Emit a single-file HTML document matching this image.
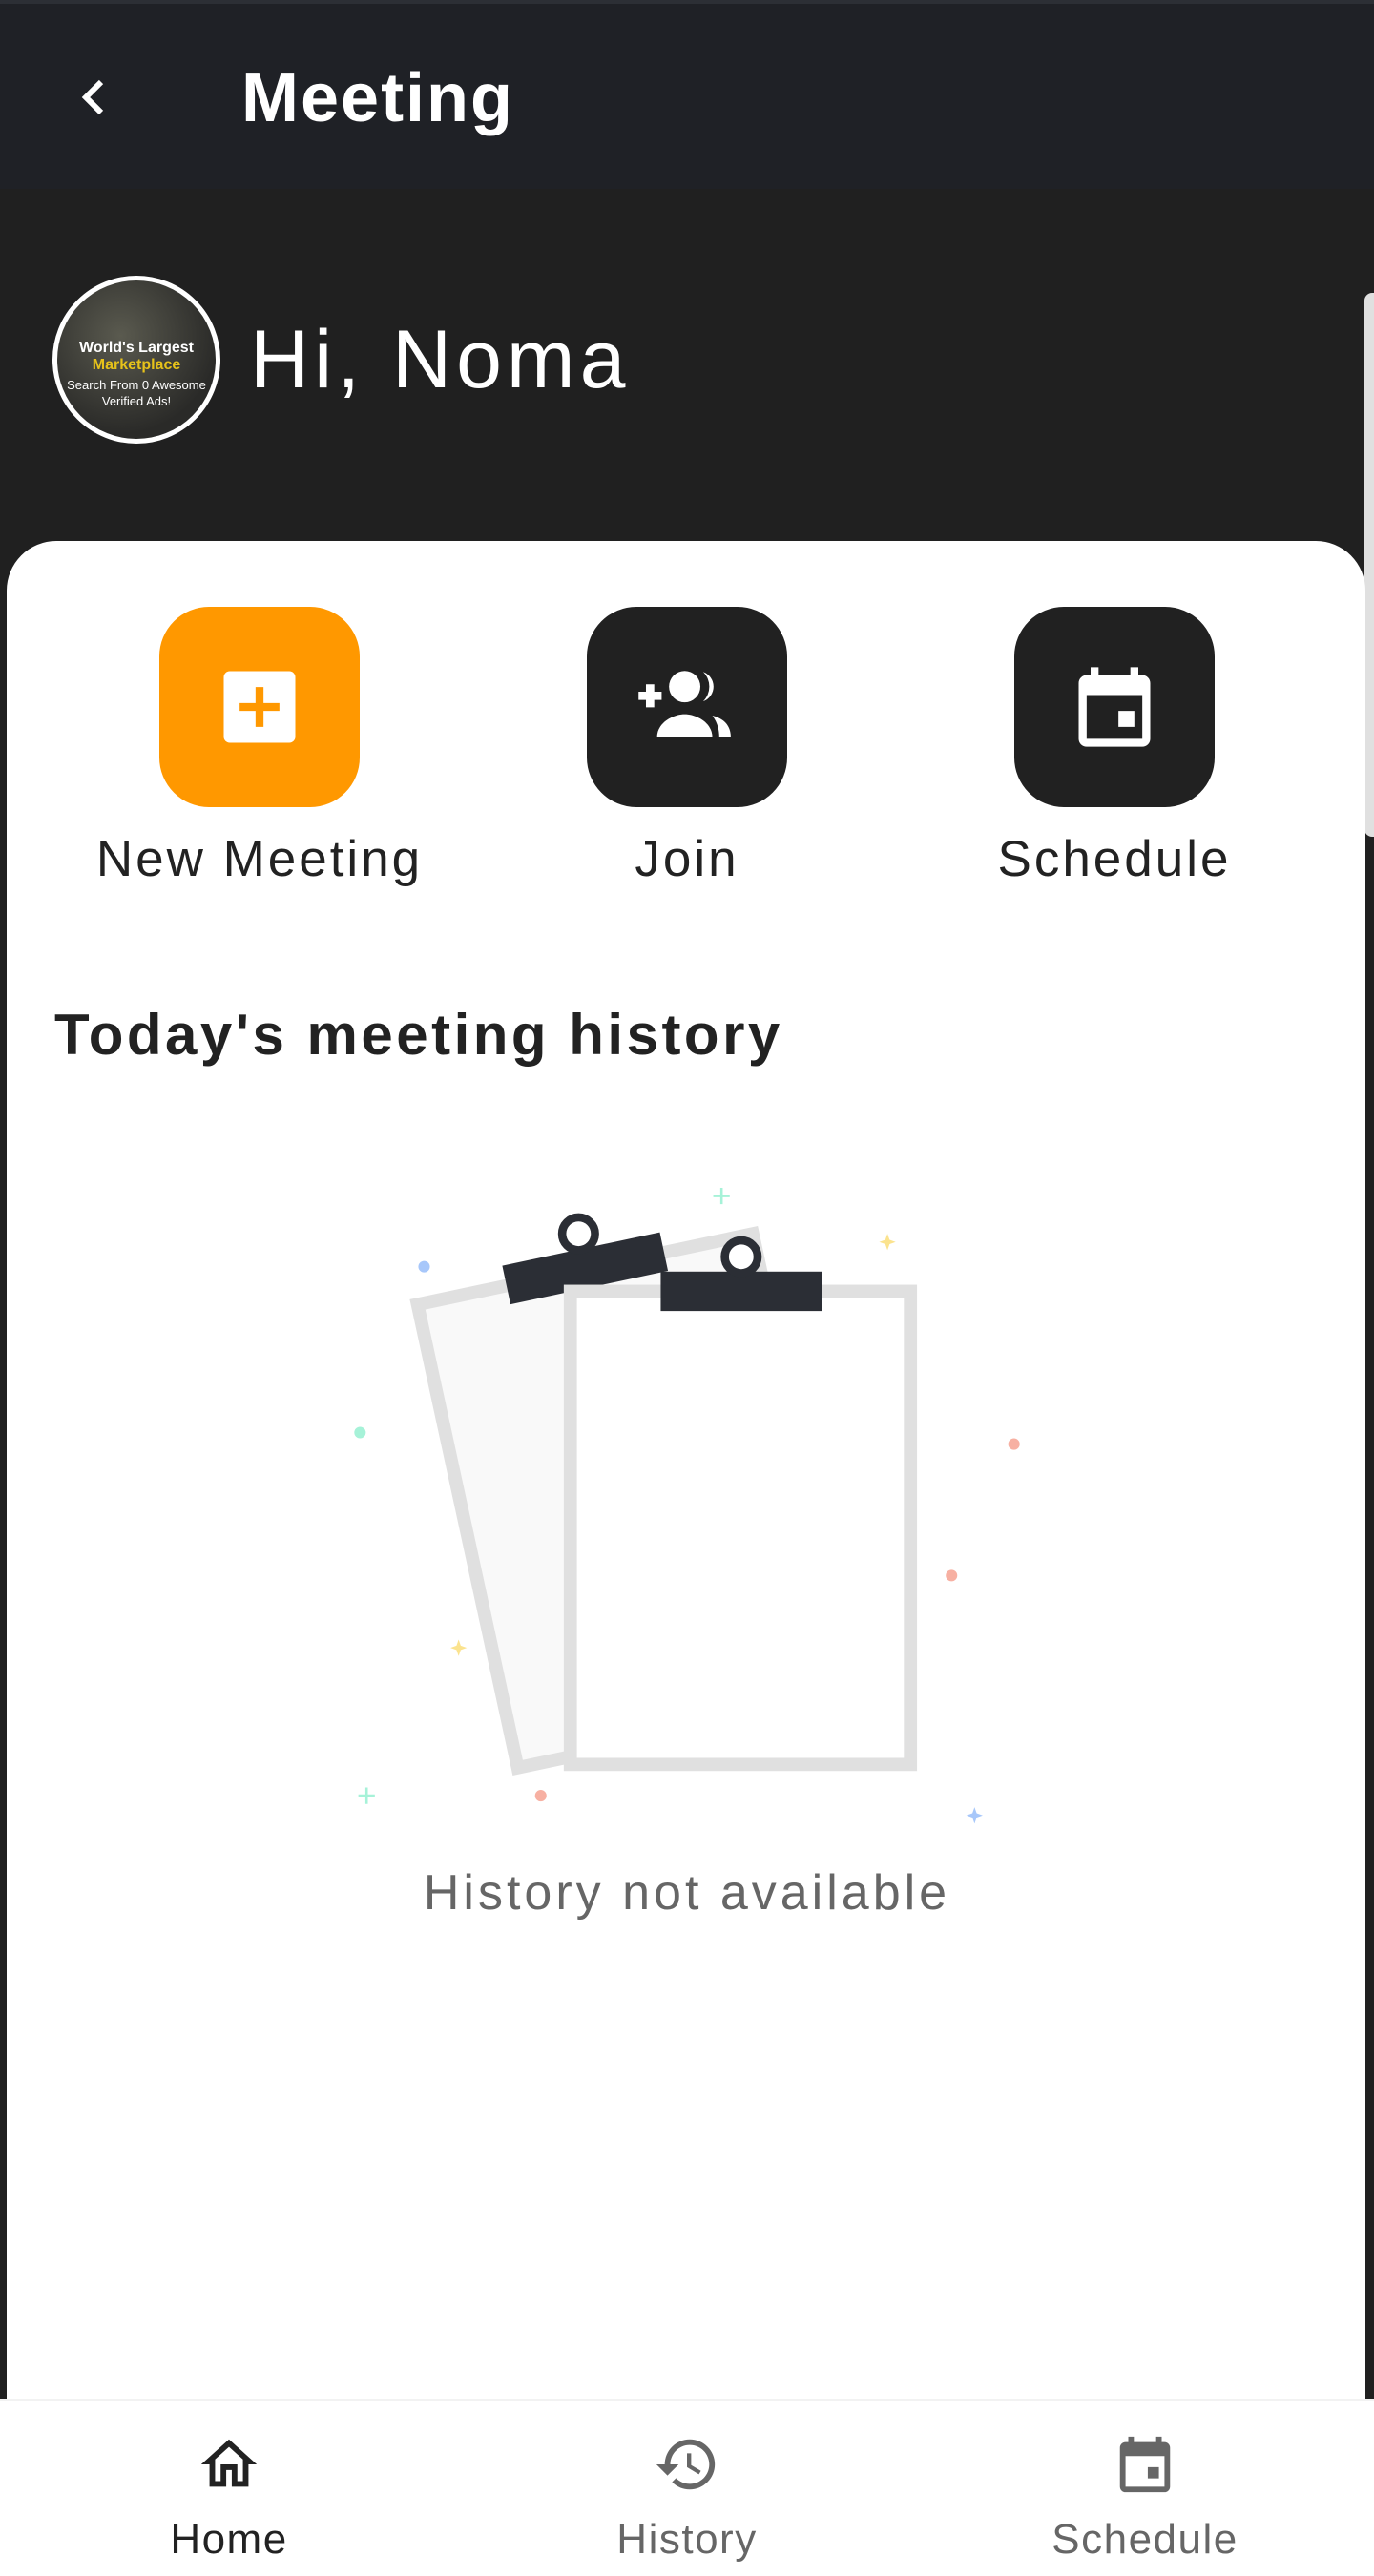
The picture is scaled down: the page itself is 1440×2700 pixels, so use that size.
<!DOCTYPE html>
<html><head><meta charset="utf-8"><style>
*{margin:0;padding:0;box-sizing:border-box}
body{width:1440px;height:2700px;background:#202020;font-family:"Liberation Sans",sans-serif;position:relative;overflow:hidden}
.top{position:absolute;left:0;top:0;width:1440px;height:198px;background:#1f2126;border-top:4px solid #2c2f35}
.title{position:absolute;left:253px;top:58px;font-size:72px;font-weight:bold;color:#fff;letter-spacing:2px}
.hi{position:absolute;left:262px;top:328px;font-size:86px;color:#fff;letter-spacing:5px}
.card{position:absolute;left:7px;top:567px;width:1424px;height:2000px;background:#fff;border-radius:52px 52px 0 0}
.btn{position:absolute;top:636px;width:210px;height:210px;border-radius:52px;background:#212121}
.lbl{position:absolute;top:870px;width:460px;text-align:center;font-size:53px;color:#222;letter-spacing:3px}
.h{position:absolute;left:57px;top:1050px;font-size:60px;font-weight:bold;color:#222;letter-spacing:3.5px}
.na{position:absolute;left:0;width:1440px;top:1954px;text-align:center;font-size:52px;color:#666;letter-spacing:4px}
.nav{position:absolute;left:0;top:2515px;width:1440px;height:185px;background:#fff;border-top:2px solid #f2f2f2}
.nl{position:absolute;top:2637px;width:300px;text-align:center;font-size:44px;color:#666;letter-spacing:1.5px}
</style></head><body>
<div class="top">
<svg style="position:absolute;left:78px;top:76px" width="40" height="44" viewBox="0 0 40 44"><path d="M28 6 L12 22 L28 38" stroke="#fff" stroke-width="6" fill="none"/></svg>
<div class="title">Meeting</div>
</div>
<div style="position:absolute;left:1430px;top:307px;width:10px;height:570px;background:#e0e0e0;border-radius:8px 0 0 8px"></div>
<div style="position:absolute;left:55px;top:289px;width:176px;height:176px;border-radius:50%;border:5px solid #fff;background:radial-gradient(circle at 40% 35%,#5a5a4f,#2a2a28 70%);overflow:hidden;text-align:center;color:#fff">
<div style="margin-top:62px;font-size:16px;font-weight:bold">World's Largest</div>
<div style="font-size:16px;font-weight:bold;color:#e6c21a">Marketplace</div>
<div style="font-size:13px;margin-top:4px;white-space:nowrap">Search From 0 Awesome</div>
<div style="font-size:13px;margin-top:2px">Verified Ads!</div>
</div>
<div class="hi">Hi, Noma</div>
<div class="card"></div>
<div class="btn" style="left:167px;background:#ff9800"><svg style="position:absolute;left:55px;top:55px" width="100" height="100" viewBox="0 0 24 24"><rect x="3" y="3" width="18" height="18" rx="1.5" fill="#fff"/><path d="M12 7v10M7 12h10" stroke="#ff9800" stroke-width="2"/></svg></div>
<div class="btn" style="left:615px"><svg style="position:absolute;left:40px;top:45px" width="130" height="116" viewBox="0 0 24 24"><path d="M1.5 10h5M4 7.5v5" stroke="#fff" stroke-width="1.8"/><circle cx="11.5" cy="8" r="3.4" fill="#fff"/><path d="M5.5 19c0-3.2 3.5-5 6-5s6 1.8 6 5z" fill="#fff"/><path d="M15.5 4.8a3.4 3.4 0 0 1 0 6.4 4.5 4.5 0 0 0 0-6.4z" fill="#fff"/><path d="M17.5 14.3c2.2.5 4 1.9 4 4.7h-2.5c0-2-.6-3.5-1.5-4.7z" fill="#fff"/></svg></div>
<div class="btn" style="left:1063px"><svg style="position:absolute;left:55px;top:55px" width="100" height="100" viewBox="0 0 24 24"><path d="M19 4h-1V2h-2v2H8V2H6v2H5c-1.1 0-2 .9-2 2v14c0 1.1.9 2 2 2h14c1.1 0 2-.9 2-2V6c0-1.1-.9-2-2-2zm0 16H5V9h14v11zm-6-7h4v4h-4z" fill="#fff"/></svg></div>
<div class="lbl" style="left:42px">New Meeting</div>
<div class="lbl" style="left:490px">Join</div>
<div class="lbl" style="left:938px">Schedule</div>
<div class="h">Today's meeting history</div>
<svg style="position:absolute;left:0;top:0" width="1440" height="2700" viewBox="0 0 836 1568">
<polygon points="254,794 458,751 519,1033 315,1076" fill="#f9f9f9" stroke="#e0e0e0" stroke-width="8"/>
<g transform="rotate(-12 356 772)"><rect x="307" y="760" width="98" height="24" fill="#2b2e35"/></g>
<circle cx="352" cy="751" r="10" fill="#fff" stroke="#2b2e35" stroke-width="5"/>
<rect x="347" y="786" width="207" height="288" fill="#fff" stroke="#e0e0e0" stroke-width="8"/>
<rect x="402" y="774" width="98" height="24" fill="#2b2e35"/>
<circle cx="451" cy="765" r="10" fill="#fff" stroke="#2b2e35" stroke-width="5"/>
<circle cx="258" cy="771" r="3.5" fill="#a7c7fa"/>
<circle cx="219" cy="872" r="3.5" fill="#a6f2d8"/>
<circle cx="329" cy="1093" r="3.5" fill="#f7b0a2"/>
<circle cx="579" cy="959" r="3.5" fill="#f7b0a2"/>
<circle cx="617" cy="879" r="3.5" fill="#f7b0a2"/>
<path d="M439 723v10M434 728h10" stroke="#a6f2d8" stroke-width="1.5"/>
<path d="M223 1088v10M218 1093h10" stroke="#a6f2d8" stroke-width="1.5"/>
<path d="M540 751l1.3 3.7 3.7 1.3-3.7 1.3-1.3 3.7-1.3-3.7-3.7-1.3 3.7-1.3z" fill="#fbe38e"/>
<path d="M279 998l1.3 3.7 3.7 1.3-3.7 1.3-1.3 3.7-1.3-3.7-3.7-1.3 3.7-1.3z" fill="#fbe38e"/>
<path d="M593 1100l1.3 3.7 3.7 1.3-3.7 1.3-1.3 3.7-1.3-3.7-3.7-1.3 3.7-1.3z" fill="#a7c7fa"/>
</svg>
<div class="na">History not available</div>
<div class="nav"></div>
<svg style="position:absolute;left:205px;top:2548px" width="70" height="70" viewBox="0 0 24 24"><path d="M12 5.69l5 4.5V18h-2v-6H9v6H7v-7.81l5-4.5M12 3L2 12h3v8h6v-6h2v6h6v-8h3L12 3z" fill="#222"/></svg>
<svg style="position:absolute;left:685px;top:2548px" width="70" height="70" viewBox="0 0 24 24"><path d="M13 3a9 9 0 0 0-9 9H1l3.89 3.89.07.14L9 12H6c0-3.87 3.130-7 7-7s7 3.13 7 7-3.13 7-7 7c-1.93 0-3.68-.79-4.94-2.06l-1.42 1.42A8.954 8.954 0 0 0 13 21a9 9 0 0 0 0-18zm-1 5v5l4.28 2.54.72-1.21-3.5-2.08V8H12z" fill="#666"/></svg>
<svg style="position:absolute;left:1165px;top:2548px" width="70" height="70" viewBox="0 0 24 24"><path d="M19 4h-1V2h-2v2H8V2H6v2H5c-1.1 0-2 .9-2 2v14c0 1.1.9 2 2 2h14c1.1 0 2-.9 2-2V6c0-1.1-.9-2-2-2zm0 16H5V9h14v11zm-6-7h4v4h-4z" fill="#666"/></svg>
<div class="nl" style="left:90px;color:#222">Home</div>
<div class="nl" style="left:570px">History</div>
<div class="nl" style="left:1050px">Schedule</div>
</body></html>
